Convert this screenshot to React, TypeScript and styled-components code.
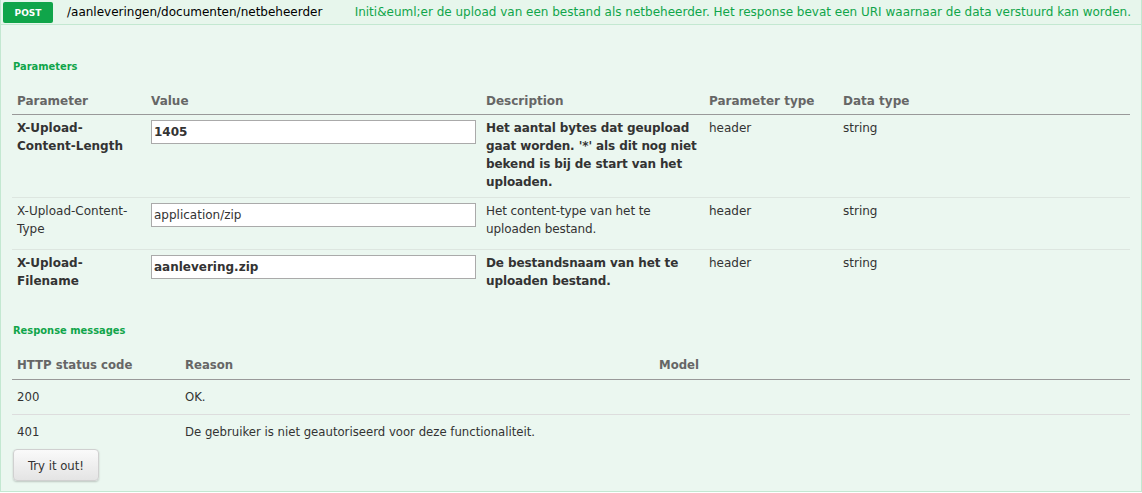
import React from "react";
import styled, { createGlobalStyle } from "styled-components";

const green = "#10a54a";
const sans = `"DejaVu Sans", Verdana, sans-serif`;
const narrow = `"DejaVu Sans Condensed", "DejaVu Sans", sans-serif`;

const Global = createGlobalStyle`
  body {
    margin: 0;
    background: #fff;
    font-family: ${sans};
    font-size: 12px;
    color: #333;
  }
`;

const Operation = styled.div`
  width: 1142px;
`;

const Heading = styled.div`
  display: flex;
  align-items: center;
  height: 24px;
  padding: 0 10px 0 2px;
  background: #e7f6ec;
  border: 1px solid #c3e8d1;
  border-top: none;
`;

const Method = styled.span`
  display: flex;
  align-items: center;
  justify-content: center;
  width: 50px;
  height: 21px;
  margin-top: 1px;
  background: ${green};
  color: #fff;
  border-radius: 2px;
  font-size: 9px;
  font-weight: bold;
`;

const Path = styled.span`
  margin-left: 14px;
  color: #000;
  font-size: 12px;
`;

const Summary = styled.span`
  margin-left: auto;
  color: ${green};
  font-size: 12px;
`;

const Content = styled.div`
  background: #ebf7f0;
  border: 1px solid #c3e8d1;
  border-top: none;
  padding: 10px 10px 10px 11px;
`;

const SectionTitle = styled.h4<{ $top: number }>`
  margin: ${(p) => p.$top}px 0 15px 1px;
  font-family: ${narrow};
  font-size: 11px;
  line-height: 14px;
  font-weight: bold;
  color: ${green};
`;

const Table = styled.table`
  width: 1118px;
  border-collapse: collapse;
  table-layout: fixed;
`;

const Th = styled.th<{ $w?: number }>`
  width: ${(p) => (p.$w ? `${p.$w}px` : "auto")};
  text-align: left;
  padding: 4px 5px 5px;
  line-height: 16px;
  font-size: 12px;
  font-weight: bold;
  color: #666;
  border-bottom: 1px solid #999;
`;

const Row = styled.tr<{ $h: number }>`
  height: ${(p) => p.$h}px;
  border-bottom: 1px solid #dde6e0;
  &:last-child {
    border-bottom: none;
  }
`;

const Td = styled.td<{ $strong?: boolean }>`
  vertical-align: top;
  padding: 4px 5px 0;
  line-height: 18px;
  font-size: 12px;
  font-weight: ${(p) => (p.$strong ? "bold" : "normal")};
  color: #333;
  word-wrap: break-word;
`;

const DescTd = styled(Td)`
  padding-right: 0;
  letter-spacing: -0.1px;
`;

const InputCell = styled.td`
  vertical-align: top;
  padding: 5px 5px 0;
`;

const Input = styled.input<{ $strong?: boolean }>`
  box-sizing: border-box;
  display: block;
  width: 325px;
  height: 24px;
  margin: 0;
  padding: 1px 2px;
  border: 1px solid #aaa;
  background: #fff;
  font-family: ${sans};
  font-size: 12px;
  font-weight: ${(p) => (p.$strong ? "bold" : "normal")};
  color: #333;
  outline: none;
`;

const RespTh = styled(Th)`
  font-family: ${narrow};
  font-size: 13px;
  padding: 4px 5px 6px;
`;

const RespRow = styled.tr<{ $h: number }>`
  height: ${(p) => p.$h}px;
  border-bottom: 1px solid #dddddd;
  &:last-child {
    border-bottom: none;
  }
`;

const RespTd = styled.td`
  vertical-align: top;
  padding: 9px 5px 0;
  line-height: 16px;
  font-family: ${narrow};
  font-size: 13px;
  color: #333;
`;

const TryButton = styled.button`
  display: block;
  margin: 1px 0 0 1px;
  width: 86px;
  height: 32px;
  border: 1px solid #d0d0d0;
  border-radius: 4px;
  background: linear-gradient(#fafafa, #e4e4e4);
  box-shadow: 0 1px 2px rgba(0, 0, 0, 0.2);
  font-family: ${narrow};
  font-size: 13px;
  color: #333;
  cursor: pointer;
`;

type Param = {
  name: string;
  value: string;
  description: string;
  required: boolean;
  height: number;
};

const params: Param[] = [
  {
    name: "X-Upload-Content-Length",
    value: "1405",
    description:
      "Het aantal bytes dat geupload gaat worden. '*' als dit nog niet bekend is bij de start van het uploaden.",
    required: true,
    height: 83,
  },
  {
    name: "X-Upload-Content-Type",
    value: "application/zip",
    description: "Het content-type van het te uploaden bestand.",
    required: false,
    height: 52,
  },
  {
    name: "X-Upload-Filename",
    value: "aanlevering.zip",
    description: "De bestandsnaam van het te uploaden bestand.",
    required: true,
    height: 50,
  },
];

const responses = [
  { code: "200", reason: "OK.", h: 35 },
  { code: "401", reason: "De gebruiker is niet geautoriseerd voor deze functionaliteit.", h: 34 },
];

export default function App() {
  return (
    <>
      <Global />
      <Operation>
        <Heading>
          <Method>POST</Method>
          <Path>/aanleveringen/documenten/netbeheerder</Path>
          <Summary>
            Initi&amp;euml;er de upload van een bestand als netbeheerder. Het response bevat een URI
            waarnaar de data verstuurd kan worden.
          </Summary>
        </Heading>
        <Content>
          <SectionTitle $top={25}>Parameters</SectionTitle>
          <Table>
            <thead>
              <tr>
                <Th $w={124}>Parameter</Th>
                <Th $w={325}>Value</Th>
                <Th $w={213}>Description</Th>
                <Th $w={124}>Parameter type</Th>
                <Th>Data type</Th>
              </tr>
            </thead>
            <tbody>
              {params.map((p) => (
                <Row key={p.name} $h={p.height}>
                  <Td $strong={p.required}>{p.name}</Td>
                  <InputCell>
                    <Input $strong={p.required} defaultValue={p.value} />
                  </InputCell>
                  <DescTd $strong={p.required}>{p.description}</DescTd>
                  <Td>header</Td>
                  <Td>string</Td>
                </Row>
              ))}
            </tbody>
          </Table>
          <SectionTitle $top={24}>Response messages</SectionTitle>
          <Table>
            <thead>
              <tr>
                <RespTh $w={158}>HTTP status code</RespTh>
                <RespTh $w={464}>Reason</RespTh>
                <RespTh>Model</RespTh>
              </tr>
            </thead>
            <tbody>
              {responses.map((r) => (
                <RespRow key={r.code} $h={r.h}>
                  <RespTd>{r.code}</RespTd>
                  <RespTd>{r.reason}</RespTd>
                  <RespTd />
                </RespRow>
              ))}
            </tbody>
          </Table>
          <TryButton>Try it out!</TryButton>
        </Content>
      </Operation>
    </>
  );
}
